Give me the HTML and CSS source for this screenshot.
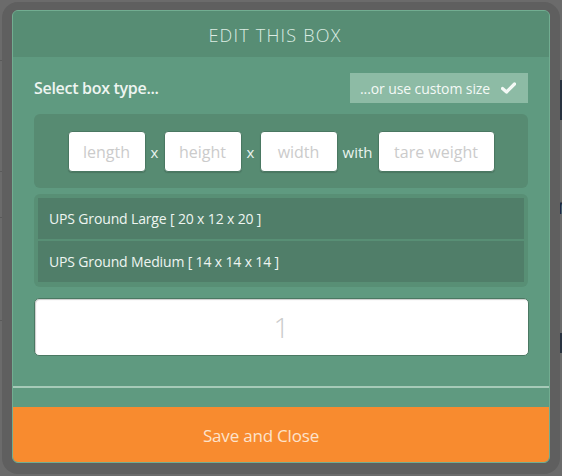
FILE: index.html
```html
<!DOCTYPE html>
<html>
<head>
<meta charset="utf-8">
<link rel="stylesheet" href="styles.css">
</head>
<body>
<div class="backdrop">
  <div class="bg-line l1"></div>
  <div class="bg-line l2"></div>
  <div class="bg-line l3"></div>
  <div class="bg-line l4"></div>
  <div class="bg-nav"></div>
  <div class="bg-nav2"></div>
  <div class="bg-text t1">m</div>
  <div class="bg-text t2">e</div>
  <div class="bg-text t3">g</div>
</div>
<div class="frame">
  <div class="modal">
    <div class="modal-header">EDIT THIS BOX</div>
    <div class="modal-body">
      <div class="type-row">
        <span class="type-label">Select box type...</span>
        <button class="custom-btn">...or use custom size
          <svg class="check" width="15" height="12" viewBox="0 0 15 12"><path d="M1.5 6.5 L5.5 10 L13.5 2" fill="none" stroke="#f4f9f6" stroke-width="3.2" stroke-linecap="round" stroke-linejoin="round"/></svg>
        </button>
      </div>
      <div class="custom-panel">
        <input class="dim" placeholder="length">
        <span class="sep">x</span>
        <input class="dim" placeholder="height">
        <span class="sep">x</span>
        <input class="dim" placeholder="width">
        <span class="sep with">with</span>
        <input class="dim tare" placeholder="tare weight">
      </div>
      <div class="list-panel">
        <div class="list-item">UPS Ground Large [ 20 x 12 x 20 ]</div>
        <div class="list-item">UPS Ground Medium [ 14 x 14 x 14 ]</div>
      </div>
      <input class="qty" placeholder="1">
    </div>
    <div class="divider"></div>
    <button class="save">Save and Close</button>
  </div>
</div>
</body>
</html>
```
FILE: styles.css
```css
* { box-sizing: border-box; }
html, body {
  margin: 0;
  padding: 0;
  width: 562px;
  height: 476px;
  overflow: hidden;
}
body {
  background: #6b6b6b;
  font-family: "Open Sans", "DejaVu Sans", sans-serif;
  position: relative;
}
.backdrop { position: absolute; inset: 0; }
.bg-line { position: absolute; left: 0; width: 14px; height: 1px; background: #5a5a5a; }
.l1 { top: 60px; }
.l2 { top: 171px; }
.l3 { top: 217px; }
.l4 { top: 320px; }
.bg-nav { position: absolute; right: 0; top: 80px; width: 14px; height: 40px; background: #293340; }
.bg-nav2 { position: absolute; right: 0; top: 333px; width: 14px; height: 20px; background: #293340; }
.bg-text { position: absolute; left: 549px; color: #2a2f3a; font-family: "Open Sans", sans-serif; line-height: 1; }
.t1 { top: 193px; font-size: 24px; color: #1f2a40; }
.t2 { top: 232px; font-size: 15px; color: #333; }
.t3 { top: 258px; font-size: 15px; color: #333; }

.frame {
  position: relative;
  margin: 2px;
  width: 558px;
  height: 472px;
  padding: 8px 10px 0 10px;
  background: #5f5f5f;
  border-radius: 16px;
}
.modal {
  width: 538px;
  height: 453px;
  background: #5f9a80;
  border: 1px solid #72ad91;
  border-radius: 6px;
  overflow: hidden;
  display: flex;
  flex-direction: column;
}
.modal-header {
  height: 46px;
  flex: none;
  background: #578d74;
  color: #dcece3;
  font-weight: 300;
  font-size: 18px;
  text-align: center;
  line-height: 48px;
  letter-spacing: 1.2px;
  padding-right: 12px;
}
.modal-body {
  padding: 16px 21px 0 21px;
  display: flex;
  flex-direction: column;
}
.type-row {
  display: flex;
  justify-content: space-between;
  align-items: center;
  height: 30px;
}
.type-label {
  color: #eef5f1;
  font-size: 16px;
  font-weight: 600;
  letter-spacing: -0.3px;
}
.custom-btn {
  height: 30px;
  width: 178px;
  border: none;
  background: #8dbba5;
  color: #f4f9f6;
  font-family: inherit;
  font-size: 14px;
  padding: 0 12px 0 10px;
  display: flex;
  align-items: center;
  justify-content: space-between;
  letter-spacing: -0.1px;
}
.check { display: block; }
.custom-panel {
  margin-top: 11px;
  height: 74px;
  background: #578b72;
  border-radius: 6px;
  display: flex;
  align-items: center;
  justify-content: center;
  padding-top: 1px;
}
.dim {
  width: 78px;
  height: 41px;
  border: 1px solid #4a7862;
  border-radius: 4px;
  background: #fff;
  font-family: inherit;
  font-size: 16px;
  text-align: center;
  color: #555;
  outline: none;
  box-shadow: 0 1px 1px rgba(0,0,0,0.15);
}
.dim::placeholder, .qty::placeholder { color: #cbcbcb; opacity: 1; }
.dim.tare { width: 117px; }
.sep {
  color: #e9f3ee;
  font-size: 15px;
  width: 18px;
  text-align: center;
}
.sep.with { width: 40px; }
.list-panel {
  margin-top: 6px;
  height: 93px;
  background: #588f75;
  border-radius: 6px;
  padding: 4px 4px 0 4px;
  display: flex;
  flex-direction: column;
  gap: 2px;
}
.list-item {
  height: 41px;
  background: #507e69;
  color: #eef5f1;
  font-size: 14px;
  padding-left: 11px;
  line-height: 41px;
  letter-spacing: -0.15px;
}
.qty {
  margin-top: 11px;
  width: 495px;
  height: 58px;
  border: 1px solid #4a7862;
  border-radius: 5px;
  background: #fff;
  font-family: inherit;
  font-size: 28px;
  font-weight: 300;
  text-align: center;
  outline: none;
  box-shadow: inset 1px 1px 1px rgba(0,0,0,0.2);
}
.divider {
  margin-top: 30px;
  height: 2px;
  background: #a6cab8;
  flex: none;
}
.save {
  margin-top: 19px;
  height: 56px;
  flex: none;
  border: none;
  background: #f88b2f;
  color: #fde3cc;
  font-family: inherit;
  font-size: 17px;
  font-weight: 400;
  width: 100%;
  padding: 0 40px 0 0;
  letter-spacing: -0.2px;
  border-radius: 0 0 5px 5px;
}
```
